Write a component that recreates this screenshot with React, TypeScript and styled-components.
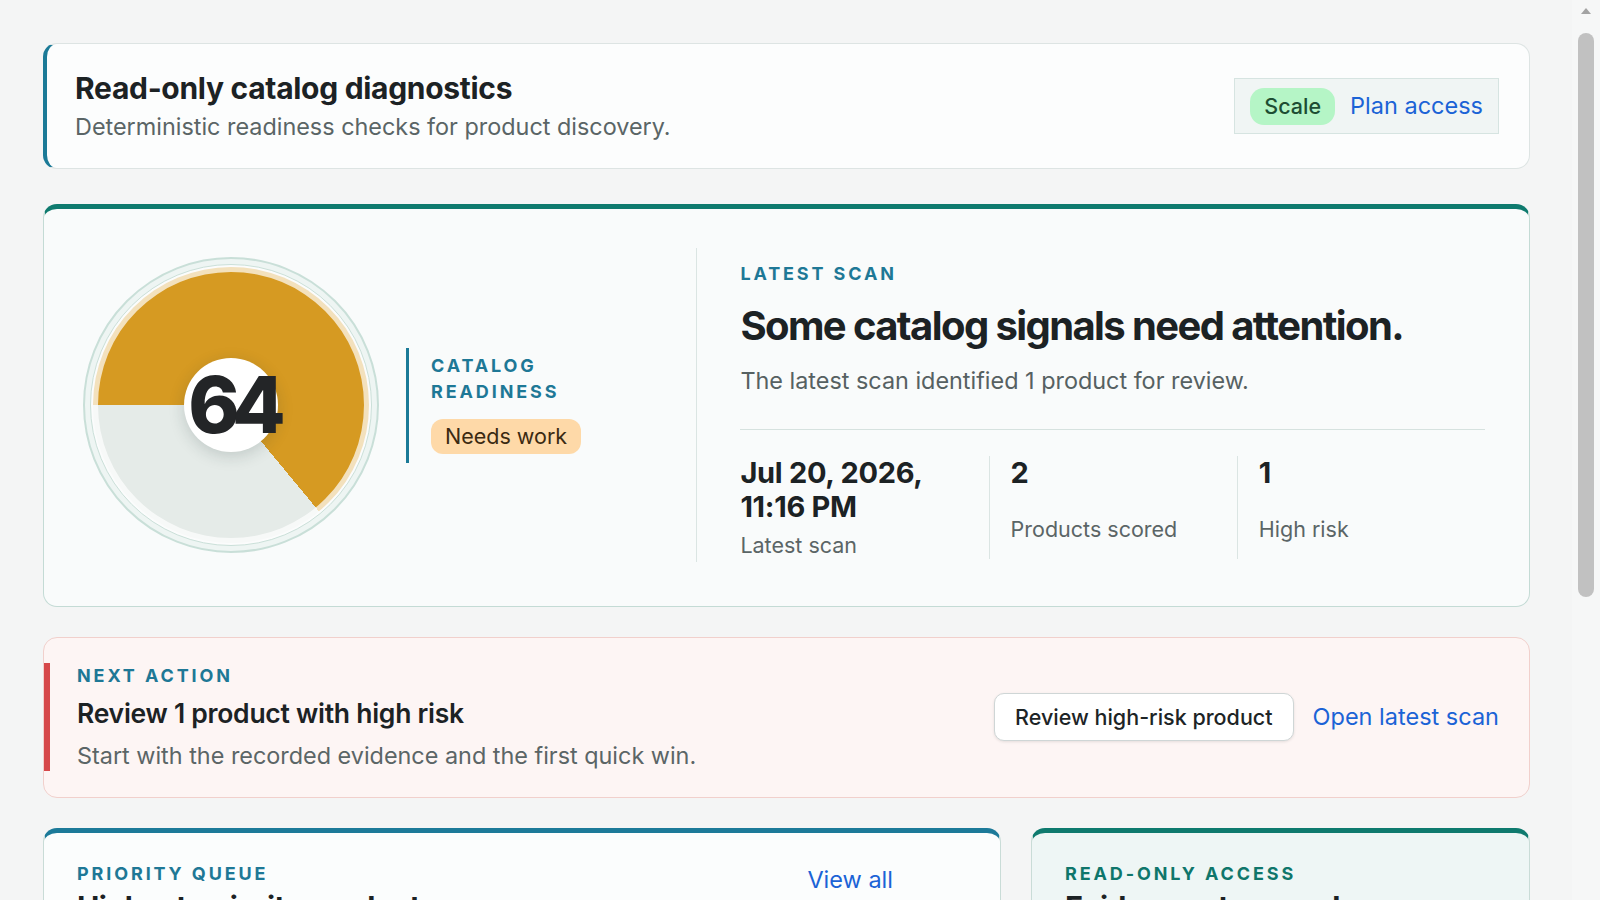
import React from "react";
import styled, { createGlobalStyle } from "styled-components";

const GlobalStyle = createGlobalStyle`
  * { box-sizing: border-box; }
  html, body {
    height: 100%;
    overflow: hidden;
  }
  body {
    margin: 0;
    background: #f4f5f5;
    font-family: Inter, "Noto Sans", "Liberation Sans", sans-serif;
    color: #1d2426;
  }
`;

const products = [
  {
    id: "p1",
    name: "Linen Throw Blanket",
    detail: "Missing GTIN · thin description · no size attribute",
    score: 41,
    risk: "High risk",
    tone: "high" as const,
  },
  {
    id: "p2",
    name: "Ceramic Pour-Over Set",
    detail: "Alt text missing on 2 of 5 images",
    score: 87,
    risk: "Low risk",
    tone: "low" as const,
  },
];

const App = () => {
  return (
    <>
      <GlobalStyle />
      <Page>
        <HeaderCard>
          <div>
            <PageTitle>Read-only catalog diagnostics</PageTitle>
            <PageSubtitle>Deterministic readiness checks for product discovery.</PageSubtitle>
          </div>
          <PlanBox>
            <PlanPill>Scale</PlanPill>
            <TextLink href="#">Plan access</TextLink>
          </PlanBox>
        </HeaderCard>

        <Hero>
          <ScorePanel>
            <GaugeFrame>
              <GaugeRing>
                <Pie $value={64}>
                  <Knob>
                    <ScoreNumber>64</ScoreNumber>
                  </Knob>
                </Pie>
              </GaugeRing>
            </GaugeFrame>
            <ReadinessBlock>
              <Eyebrow $color="#1e7896">Catalog readiness</Eyebrow>
              <StatusPill>Needs work</StatusPill>
            </ReadinessBlock>
          </ScorePanel>

          <ScanPanel>
            <Eyebrow $color="#1e7896">Latest scan</Eyebrow>
            <HeroHeading>Some catalog signals need attention.</HeroHeading>
            <HeroSummary>The latest scan identified 1 product for review.</HeroSummary>
            <Stats>
              <Stat>
                <StatValue>Jul 20, 2026, 11:16 PM</StatValue>
                <StatLabel>Latest scan</StatLabel>
              </Stat>
              <Stat>
                <StatValue>2</StatValue>
                <StatLabel>Products scored</StatLabel>
              </Stat>
              <Stat>
                <StatValue>1</StatValue>
                <StatLabel>High risk</StatLabel>
              </Stat>
            </Stats>
          </ScanPanel>
        </Hero>

        <ActionCard>
          <ActionBody>
            <Eyebrow $color="#1e7896">Next action</Eyebrow>
            <ActionTitle>Review 1 product with high risk</ActionTitle>
            <ActionText>Start with the recorded evidence and the first quick win.</ActionText>
          </ActionBody>
          <Actions>
            <Button type="button">Review high-risk product</Button>
            <TextLink href="#">Open latest scan</TextLink>
          </Actions>
        </ActionCard>

        <BottomGrid>
          <Panel $accent="#1c7a99" $bg="#fbfdfd">
            <PanelHeader>
              <div>
                <Eyebrow $color="#1e7896">Priority queue</Eyebrow>
                <PanelTitle>Highest-priority products</PanelTitle>
              </div>
              <ViewAll href="#">View all</ViewAll>
            </PanelHeader>
            <ProductList>
              {products.map((p) => (
                <ProductRow key={p.id}>
                  <div>
                    <ProductName>{p.name}</ProductName>
                    <ProductDetail>{p.detail}</ProductDetail>
                  </div>
                  <ProductScore>{p.score}</ProductScore>
                  <RiskPill $tone={p.tone}>{p.risk}</RiskPill>
                </ProductRow>
              ))}
            </ProductList>
            <PanelNote>Scores are recalculated on every scan. Rows are ordered by risk, then by traffic.</PanelNote>
          </Panel>

          <Panel $accent="#0e7a6e" $bg="#eef6f5">
            <Eyebrow $color="#0f766b">Read-only access</Eyebrow>
            <PanelTitle>Evidence stays under your control.</PanelTitle>
            <PanelText>
              Diagnostics only read catalog data. Nothing is written back to your store, and every finding links to
              the evidence recorded with the scan.
            </PanelText>
            <CheckList>
              <li>No product edits</li>
              <li>No theme or storefront changes</li>
              <li>Evidence saved with each scan</li>
            </CheckList>
            <TextLink href="#">Review permissions</TextLink>
          </Panel>
        </BottomGrid>
      </Page>

      <ScrollTrack>
        <ScrollArrow />
        <ScrollThumb />
      </ScrollTrack>
    </>
  );
};

export default App;

const Page = styled.main`
  display: flex;
  flex-direction: column;
  gap: 30px;
  padding: 43px 70px 43px 43px;
`;

const ScrollTrack = styled.div`
  position: fixed;
  top: 0;
  right: 0;
  width: 28px;
  height: 100vh;
  background: #f6f7f7;
`;

const ScrollArrow = styled.div`
  position: absolute;
  top: 8px;
  left: 9px;
  width: 0;
  height: 0;
  border-left: 5px solid transparent;
  border-right: 5px solid transparent;
  border-bottom: 6px solid #a3a3a3;
`;

const ScrollThumb = styled.div`
  position: absolute;
  top: 33px;
  left: 6px;
  right: 6px;
  height: 564px;
  border-radius: 8px;
  background: #c1c1c1;
`;

const HeaderCard = styled.header`
  display: flex;
  align-items: center;
  justify-content: space-between;
  margin-bottom: 5px;
  padding: 27px 30px 27px 28px;
  background: #fcfdfd;
  border: 1px solid #dde4e3;
  border-left: 4px solid #1b7a97;
  border-radius: 14px;
`;

const PageTitle = styled.h1`
  margin: 0 0 8px;
  font-size: 30px;
  line-height: 34px;
  font-weight: 700;
  letter-spacing: -0.01em;
  color: #1c2224;
`;

const PageSubtitle = styled.p`
  margin: 0;
  font-size: 23.4px;
  line-height: 28px;
  color: #5a6566;
`;

const PlanBox = styled.div`
  display: flex;
  align-items: center;
  gap: 15px;
  height: 56px;
  padding: 0 15px;
  background: #f0f5f4;
  border: 1px solid #d6e4e1;
`;

const PlanPill = styled.span`
  height: 37px;
  padding: 0 14px;
  line-height: 37px;
  font-size: 21.5px;
  font-weight: 500;
  color: #1d4d33;
  background: #b5f5c6;
  border-radius: 14px;
`;

const TextLink = styled.a`
  font-size: 23.5px;
  line-height: 30px;
  color: #1b63d6;
  text-decoration: none;
  white-space: nowrap;
`;

const Hero = styled.section`
  display: grid;
  grid-template-columns: minmax(0, 7fr) minmax(0, 9fr);
  align-items: center;
  padding: 39px 44px 44px 39px;
  background: #f9fbfb;
  border: 1px solid #c4dbd5;
  border-top: 5px solid #0e7a6e;
  border-radius: 14px;
`;

const ScorePanel = styled.div`
  display: flex;
  align-items: center;
  gap: 27px;
`;

const GaugeFrame = styled.div`
  flex: none;
  width: 296px;
  height: 296px;
  padding: 5px;
  border-radius: 50%;
  border: 2px solid #c9dfd8;
  background: #eef5f3;
`;

const GaugeRing = styled.div`
  width: 100%;
  height: 100%;
  padding: 2px;
  border-radius: 50%;
  border: 1.5px solid #cbe0d9;
  background: #fbfcfc;
`;

const Pie = styled.div<{ $value: number }>`
  display: flex;
  align-items: center;
  justify-content: center;
  width: 100%;
  height: 100%;
  border-radius: 50%;
  border: 5px solid rgba(255, 255, 255, 0.7);
  background: conic-gradient(from 270deg, #d69a22 0 ${(p) => p.$value}%, #e5ebe8 0) border-box;
`;

const Knob = styled.div`
  display: flex;
  align-items: center;
  justify-content: center;
  width: 94px;
  height: 94px;
  border-radius: 50%;
  background: #ffffff;
  box-shadow: 0 4px 16px rgba(30, 50, 50, 0.18);
`;

const ScoreNumber = styled.span`
  font-size: 78px;
  line-height: 1;
  font-weight: 800;
  letter-spacing: -0.1em;
  color: #232527;
  white-space: nowrap;
  transform: translateX(2px);
`;

const ReadinessBlock = styled.div`
  width: 180px;
  padding: 5px 0 9px 22px;
  border-left: 3px solid #1b7a97;
`;

const Eyebrow = styled.div<{ $color: string }>`
  font-size: 18px;
  line-height: 26px;
  font-weight: 700;
  letter-spacing: 0.16em;
  text-transform: uppercase;
  color: ${(p) => p.$color};
`;

const StatusPill = styled.span`
  display: inline-block;
  margin-top: 14px;
  height: 35px;
  padding: 0 14px;
  line-height: 35px;
  font-size: 21.5px;
  color: #3b2a12;
  background: #fed9a8;
  border-radius: 12px;
`;

const ScanPanel = styled.div`
  padding: 13px 0 3px 43px;
  border-left: 1px solid #dbe5e3;
`;

const HeroHeading = styled.h2`
  margin: 17px 0 0;
  font-size: 40px;
  line-height: 44px;
  font-weight: 700;
  letter-spacing: -0.04em;
  color: #1c2224;
`;

const HeroSummary = styled.p`
  margin: 18px 0 0;
  padding-bottom: 33px;
  font-size: 23.4px;
  line-height: 30px;
  color: #566162;
  border-bottom: 1px solid #d6e2df;
`;

const Stats = styled.div`
  display: grid;
  grid-template-columns: repeat(3, minmax(0, 1fr));
  padding-top: 26px;
`;

const Stat = styled.div`
  padding: 0 21px;
  border-left: 1px solid #dbe5e3;

  &:first-child {
    padding-left: 0;
    border-left: none;
  }
`;

const StatValue = styled.div`
  min-height: 52px;
  font-size: 29px;
  line-height: 34px;
  font-weight: 700;
  letter-spacing: -0.01em;
  color: #1c2224;
`;

const StatLabel = styled.div`
  margin-top: 7px;
  font-size: 21.5px;
  line-height: 28px;
  color: #5b6566;
`;

const ActionCard = styled.section`
  display: flex;
  align-items: center;
  justify-content: space-between;
  padding: 25px 30px 26px 0;
  background: #fdf5f4;
  border: 1px solid #f1d0cc;
  border-radius: 14px;
`;

const ActionBody = styled.div`
  padding-left: 27px;
  border-left: 6px solid #d6484a;
`;

const ActionTitle = styled.h3`
  margin: 7px 0 0;
  font-size: 26.5px;
  line-height: 34px;
  font-weight: 600;
  letter-spacing: -0.01em;
  color: #1c2224;
`;

const ActionText = styled.p`
  margin: 10px 0 0;
  font-size: 23.4px;
  line-height: 31px;
  color: #5b6566;
`;

const Actions = styled.div`
  display: flex;
  align-items: center;
  gap: 19px;
`;

const Button = styled.button`
  height: 48px;
  padding: 0 20px;
  font-family: inherit;
  font-size: 21.5px;
  font-weight: 500;
  color: #1d2426;
  background: #ffffff;
  border: 1px solid #cfd6d6;
  border-radius: 10px;
  box-shadow: 0 1px 3px rgba(0, 0, 0, 0.1);
  cursor: pointer;
`;

const BottomGrid = styled.div`
  display: grid;
  grid-template-columns: minmax(0, 1fr) 499px;
  gap: 30px;
  align-items: start;
`;

const Panel = styled.section<{ $accent: string; $bg: string }>`
  padding: 28px 32px 32px 33px;
  background: ${(p) => p.$bg};
  border: 1px solid #c9dcd7;
  border-top: 5px solid ${(p) => p.$accent};
  border-radius: 14px;
`;

const PanelHeader = styled.div`
  display: flex;
  align-items: flex-start;
  justify-content: space-between;
  padding-right: 75px;
`;

const ViewAll = styled(TextLink)`
  margin-top: 4px;
`;

const PanelTitle = styled.h3`
  margin: 2px 0 0;
  font-size: 30px;
  line-height: 36px;
  font-weight: 700;
  letter-spacing: -0.02em;
  color: #1c2224;
`;

const ProductList = styled.div`
  margin-top: 24px;
`;

const ProductRow = styled.div`
  display: grid;
  grid-template-columns: minmax(0, 1fr) auto auto;
  align-items: center;
  gap: 20px;
  padding: 22px 0;
  border-top: 1px solid #e0e8e6;
`;

const ProductName = styled.div`
  font-size: 22px;
  line-height: 30px;
  font-weight: 600;
  color: #1c2224;
`;

const ProductDetail = styled.div`
  margin-top: 4px;
  font-size: 19px;
  line-height: 26px;
  color: #5b6566;
`;

const ProductScore = styled.div`
  font-size: 28px;
  font-weight: 700;
  color: #1c2224;
`;

const RiskPill = styled.span<{ $tone: "high" | "low" }>`
  padding: 4px 12px;
  font-size: 19px;
  border-radius: 12px;
  color: ${(p) => (p.$tone === "high" ? "#7a1f1f" : "#1d4d33")};
  background: ${(p) => (p.$tone === "high" ? "#fbd3cf" : "#c9f3d4")};
`;

const PanelNote = styled.p`
  margin: 0;
  padding-top: 20px;
  font-size: 19px;
  line-height: 28px;
  color: #5b6566;
  border-top: 1px solid #e0e8e6;
`;

const PanelText = styled.p`
  margin: 16px 0 0;
  font-size: 21px;
  line-height: 31px;
  color: #4f5b5c;
`;

const CheckList = styled.ul`
  margin: 18px 0 22px;
  padding-left: 22px;
  font-size: 21px;
  line-height: 34px;
  color: #2b3436;
`;
